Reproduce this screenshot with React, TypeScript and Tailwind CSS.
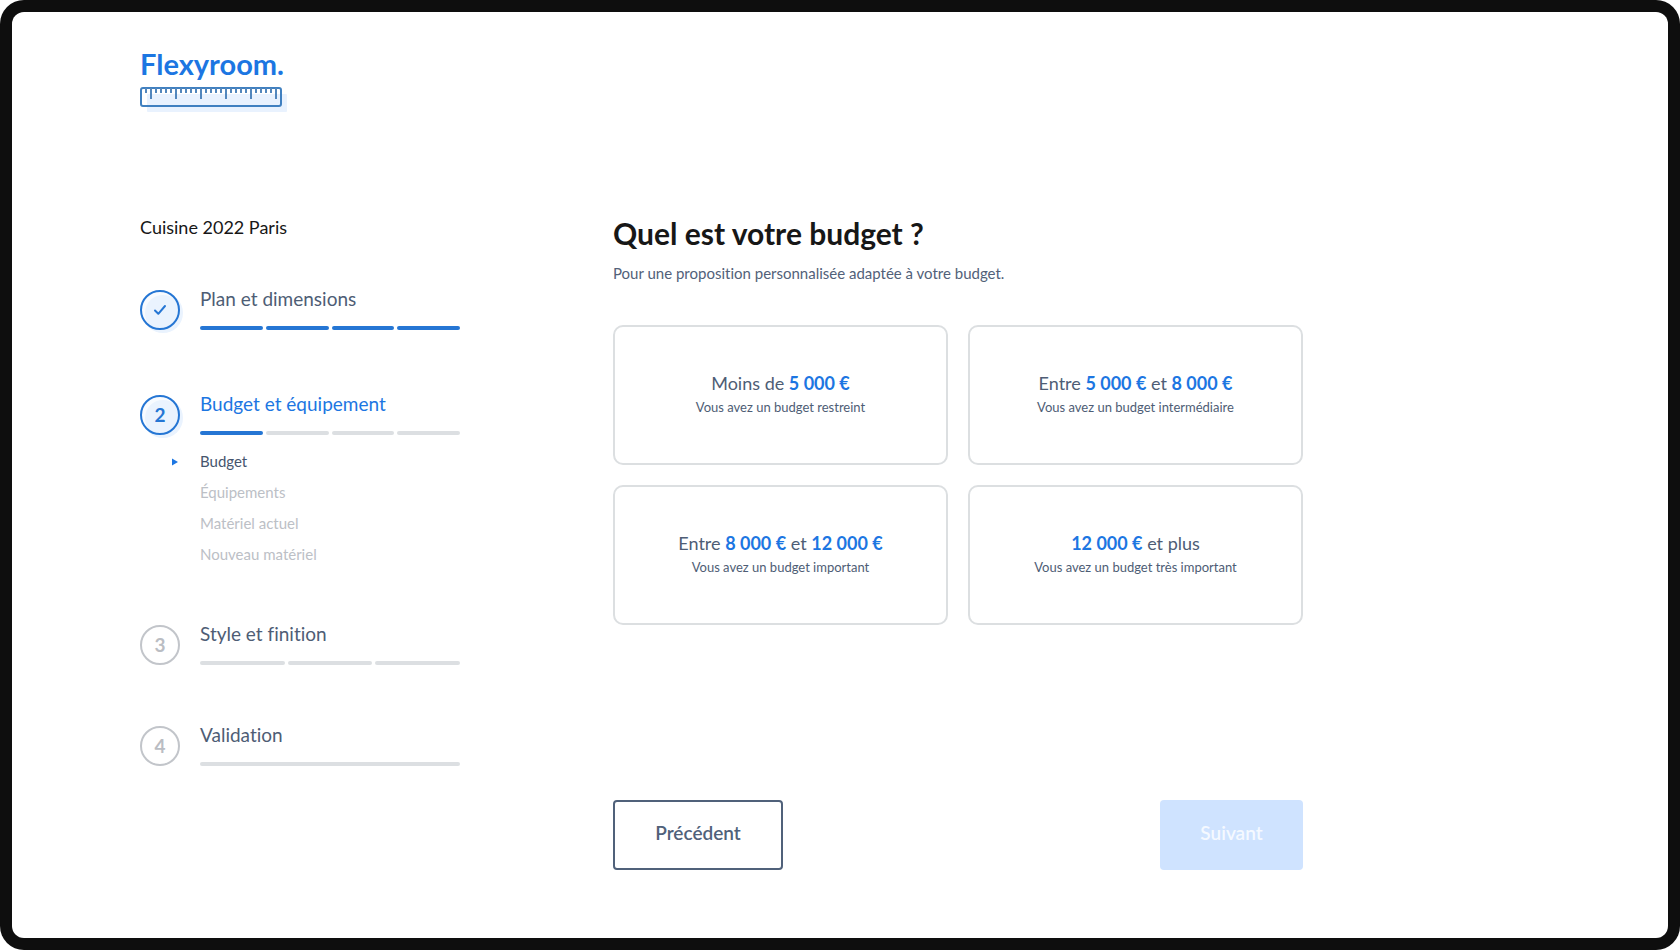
import React, { useState } from "react";
import clsx from "clsx";

interface Step {
  title: string;
  segments: number;
  completed: number;
  spacing: string;
  children?: string[];
}

const steps: Step[] = [
  { title: "Plan et dimensions", segments: 4, completed: 4, spacing: "mb-[62px]" },
  {
    title: "Budget et équipement",
    segments: 4,
    completed: 1,
    spacing: "mb-13",
    children: ["Budget", "Équipements", "Matériel actuel", "Nouveau matériel"],
  },
  { title: "Style et finition", segments: 3, completed: 0, spacing: "mb-[58px]" },
  { title: "Validation", segments: 1, completed: 0, spacing: "mb-0" },
];

const CURRENT_STEP = 1;

const price = (value: string) => <strong className="font-bold text-[#1c76e2]">{value}</strong>;

const budgets = [
  { id: "low", label: <>Moins de {price("5 000 €")}</>, hint: "Vous avez un budget restreint" },
  { id: "medium", label: <>Entre {price("5 000 €")} et {price("8 000 €")}</>, hint: "Vous avez un budget intermédiaire" },
  { id: "high", label: <>Entre {price("8 000 €")} et {price("12 000 €")}</>, hint: "Vous avez un budget important" },
  { id: "max", label: <>{price("12 000 €")} et plus</>, hint: "Vous avez un budget très important" },
];

function Logo() {
  // One tick every 5px, a long one every fifth
  const ticks = Array.from({ length: 27 }, (_, i) => i);

  return (
    <a href="#" className="block w-fit text-[#1c76e2]">
      <span className="block text-[29px] leading-10 font-bold">Flexyroom.</span>
      <svg className="mt-[3px]" width="148" height="26" viewBox="0 0 148 26" fill="none" aria-hidden="true">
        <rect x="7" y="7" width="140" height="18" rx="1" fill="#e9f2fe" />
        <rect x="1" y="1" width="140" height="18" rx="2" stroke="#4080c0" strokeWidth="2" />
        {ticks.map((i) => (
          <path
            key={i}
            d={`M${6 + i * 5} 1V${i % 5 === 1 ? 12 : 6}`}
            stroke="#5387bd"
            strokeWidth="2"
          />
        ))}
      </svg>
    </a>
  );
}

function StepBadge({ index }: { index: number }) {
  const reached = index <= CURRENT_STEP;

  return (
    <span
      className={clsx(
        "mt-[3px] flex size-10 shrink-0 items-center justify-center rounded-full border-2 text-[19px] font-bold",
        reached
          ? "border-[#2576d4] bg-[#eaf3fe] text-[#2576d4] shadow-[3px_3px_0_#eaf3fe,inset_3px_3px_0_#f8fbff]"
          : "border-[#c2c5ca] text-[#babdc3]"
      )}
    >
      {index < CURRENT_STEP ? (
        <svg width="14" height="12" viewBox="0 0 14 12" fill="none" aria-label="Terminé">
          <path d="M2 6.5L5.3 9.8L12 2" stroke="currentColor" strokeWidth="2" strokeLinecap="round" strokeLinejoin="round" />
        </svg>
      ) : (
        index + 1
      )}
    </span>
  );
}

function StepItem({ step, index }: { step: Step; index: number }) {
  return (
    <li className={clsx("flex gap-5", step.spacing)}>
      <StepBadge index={index} />
      <div className="flex-1">
        <h2 className={clsx("text-[19px] leading-6", index === CURRENT_STEP ? "text-[#1c76e2]" : "text-[#4e5d75]")}>
          {step.title}
        </h2>
        <div className="mt-[15px] flex gap-[3px]">
          {Array.from({ length: step.segments }, (_, i) => (
            <span
              key={i}
              className={clsx("h-1 flex-1 rounded-full", i < step.completed ? "bg-[#2576d4]" : "bg-[#dcdfe2]")}
            />
          ))}
        </div>

        {step.children && (
          <ul className="mt-[11px] text-[15px]">
            {step.children.map((child, i) => (
              <li key={child} className="-ml-7 flex h-[31px] items-center">
                <span className="w-7">
                  {i === 0 && (
                    <svg width="6" height="8" viewBox="0 0 6 8" aria-hidden="true">
                      <path d="M0 0.5L6 4L0 7.5Z" fill="#1c76e2" />
                    </svg>
                  )}
                </span>
                <a href="#" className={i === 0 ? "text-[#46556d]" : "text-[#bcc0c6]"}>
                  {child}
                </a>
              </li>
            ))}
          </ul>
        )}
      </div>
    </li>
  );
}

export default function App() {
  const [selected, setSelected] = useState<string | null>(null);

  return (
    <div className="min-h-screen rounded-3xl bg-[#0e0e0e] p-3 font-['Lato',sans-serif] [font-variant-ligatures:no-common-ligatures]">
      <div className="min-h-[calc(100vh-24px)] rounded-xl bg-white px-32 pt-8 pb-16">
        <header>
          <Logo />
        </header>

        <div className="mt-25 flex gap-[153px]">
          <aside className="w-80 shrink-0 pt-0.5">
            <p className="text-lg leading-6 text-[#171717]">Cuisine 2022 Paris</p>
            <ol className="mt-12">
              {steps.map((step, index) => (
                <StepItem key={step.title} step={step} index={index} />
              ))}
            </ol>
          </aside>

          <main className="max-w-[690px] flex-1">
            <h1 className="text-3xl leading-10 font-bold text-[#171717]">Quel est votre budget ?</h1>
            <p className="mt-2 text-[15px] leading-6 text-[#526179]">
              Pour une proposition personnalisée adaptée à votre budget.
            </p>

            <div className="mt-10 grid grid-cols-2 gap-5">
              {budgets.map((budget) => (
                <button
                  key={budget.id}
                  type="button"
                  aria-pressed={selected === budget.id}
                  onClick={() => setSelected(budget.id)}
                  className={clsx(
                    "flex h-[140px] flex-col items-center justify-center rounded-[10px] border-2 pb-1 text-[#4e5d75] transition-colors",
                    selected === budget.id ? "border-[#2576d4]" : "border-[#dcdfe1]"
                  )}
                >
                  <span className="text-lg leading-7">{budget.label}</span>
                  <span className="text-[13px] leading-5">{budget.hint}</span>
                </button>
              ))}
            </div>

            <div className="mt-[175px] flex justify-between text-[19px] font-semibold">
              <button type="button" className="h-[70px] w-[170px] rounded border-2 border-[#50617a] pb-1 text-[#50617a]">
                Précédent
              </button>
              <button
                type="button"
                disabled={!selected}
                className="h-[70px] w-[143px] rounded bg-[#1c76e2] pb-1 text-white disabled:bg-[#cfe3ff] disabled:text-[#f5f9ff]"
              >
                Suivant
              </button>
            </div>
          </main>
        </div>
      </div>
    </div>
  );
}
